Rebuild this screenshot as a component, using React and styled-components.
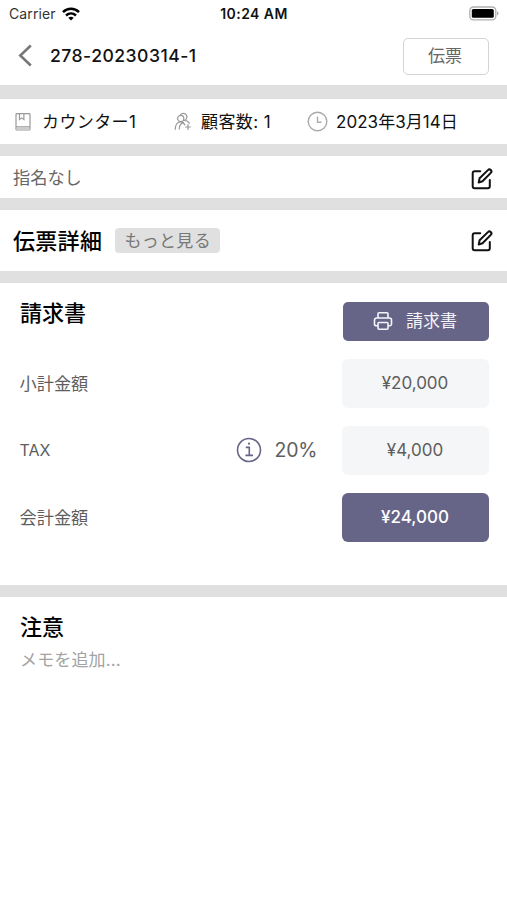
import React from "react";
import styled, { createGlobalStyle } from "styled-components";

const GlobalStyle = createGlobalStyle`
  * { box-sizing: border-box; }
  body {
    margin: 0;
    background: #fff;
    color: #111;
    font-family: Inter, "Noto Sans CJK JP", sans-serif;
  }
  svg { display: block; flex: none; }
`;

const Screen = styled.main`
  display: flex;
  flex-direction: column;
  width: 507px;
  height: 900px;
  background: #fff;
  overflow: hidden;
`;

const Divider = styled.div`
  flex: none;
  height: ${(p) => p.$size || 12}px;
  background: #e0e0e0;
`;

const StatusBar = styled.div`
  display: grid;
  grid-template-columns: 1fr auto 1fr;
  align-items: center;
  height: 27px;
  padding: 0 8px 0 9px;
  line-height: 18px;
`;

const Carrier = styled.div`
  display: flex;
  align-items: center;
  gap: 6px;
  font-size: 14px;
  letter-spacing: 0.1px;
  color: #333;
`;

const Clock = styled.div`
  font-size: 14px;
  font-weight: 600;
  letter-spacing: 0.45px;
`;

const Battery = styled.div`
  justify-self: end;
`;

const Header = styled.header`
  display: flex;
  align-items: center;
  height: 58px;
  padding: 0 18px 1px 18px;
`;

const Title = styled.h1`
  flex: 1;
  margin: 0 0 0 17px;
  font-size: 17.6px;
  font-weight: 550;
  line-height: 24px;
  letter-spacing: 0.46px;
`;

const OutlineButton = styled.button`
  width: 86px;
  height: 37px;
  margin-top: 1px;
  padding: 0 2px 0 0;
  border: 1.5px solid #d4d4d4;
  border-radius: 5px;
  background: #fff;
  color: #666;
  font: 17px/24px Inter, "Noto Sans CJK JP", sans-serif;
`;

const InfoBar = styled.div`
  display: grid;
  grid-template-columns: 160px 133px auto;
  align-items: center;
  height: 45px;
  padding-left: 14px;
`;

const InfoItem = styled.div`
  display: flex;
  align-items: center;
  gap: ${(p) => p.$gap}px;
  font-size: 17px;
  line-height: 24px;
  letter-spacing: ${(p) => p.$tracking || 0}px;
  white-space: nowrap;
`;

const EditRow = styled.section`
  display: flex;
  align-items: center;
  height: ${(p) => p.$height}px;
  padding: ${(p) => p.$top || 0}px 13px 0 13px;
`;

const Assignee = styled.span`
  flex: 1;
  margin-top: -2px;
  font-size: 17.2px;
  line-height: 24px;
  color: #666;
`;

const Heading = styled.h2`
  margin: 0;
  font-size: 22px;
  font-weight: 500;
  line-height: 30px;
  letter-spacing: ${(p) => p.$tracking || 0}px;
  color: #000;
`;

const MoreButton = styled.button`
  width: 105px;
  height: 25px;
  margin: 0 auto 0 13px;
  padding: 0;
  border: 0;
  border-radius: 4px;
  background: #e0e0e0;
  color: #777;
  font: 17px/24px Inter, "Noto Sans CJK JP", sans-serif;
  letter-spacing: 0.3px;
`;

const Invoice = styled.section`
  display: flex;
  flex-direction: column;
  height: 302px;
  padding: 18px 18px 0 20px;
`;

const InvoiceHeader = styled.div`
  display: flex;
  align-items: center;
  justify-content: space-between;
  height: 40px;
  margin-bottom: 18px;

  ${Heading} { margin-top: -16px; }
`;

const PrintButton = styled.button`
  display: flex;
  align-items: center;
  justify-content: center;
  gap: 13px;
  width: 146px;
  height: 39px;
  padding: 0 2px 0 0;
  border: 0;
  border-radius: 5px;
  background: #676587;
  color: #f5f4fb;
  font: 17px/24px Inter, "Noto Sans CJK JP", sans-serif;
`;

const AmountRow = styled.div`
  display: flex;
  align-items: center;
  height: 49px;
  margin-bottom: 18px;
`;

const AmountLabel = styled.span`
  flex: 1;
  margin: ${(p) => (p.$size ? "-2px" : "0")} 0 0 -0.5px;
  font-size: ${(p) => p.$size || 17.2}px;
  line-height: 24px;
  color: #5e5e5e;
`;

const Rate = styled.div`
  display: flex;
  align-items: center;
  gap: 13px;
  margin: -1px 25px 0 0;
  font-size: 19.5px;
  line-height: 26px;
  letter-spacing: -0.3px;
  color: #5e5e5e;
`;

const Amount = styled.div`
  width: 147px;
  height: 49px;
  padding-right: 1px;
  border-radius: 6px;
  background: ${(p) => (p.$total ? "#676587" : "#f4f6f8")};
  color: ${(p) => (p.$total ? "#fff" : "#5e5e5e")};
  font-size: 17px;
  font-weight: ${(p) => (p.$total ? 500 : 400)};
  line-height: 49px;
  text-align: center;
`;

const Notes = styled.section`
  padding: 15px 20px;
`;

const Memo = styled.p`
  margin: 6px 0 0;
  font-size: 17px;
  line-height: 24px;
  letter-spacing: 0.15px;
  color: #a3a3a3;
`;

const WifiIcon = () => (
  <svg width="18" height="14" viewBox="0 0 18 14" fill="none" stroke="#000" strokeWidth="2.5">
    <path d="M1 5.1C5.5.6 12.5.6 17 5.1" />
    <path d="M4 8.5c2.9-2.7 7.1-2.7 10 0" />
    <path d="M6.3 10.8c1.6-1.4 3.8-1.4 5.4 0L9 13.6z" fill="#000" stroke="none" />
  </svg>
);

const BatteryIcon = () => (
  <svg width="31" height="16" viewBox="0 0 31 16">
    <rect x="1.8" y="1" width="26" height="12.8" rx="3.6" fill="#fff" stroke="#b0b0b0" strokeWidth="1.3" />
    <rect x="3.8" y="3" width="22" height="8.8" rx="1.6" />
    <path d="M29 5.2c2 .8 2 3.6 0 4.4z" fill="#aaa" />
  </svg>
);

const BackIcon = () => (
  <svg width="15" height="24" viewBox="0 0 15 24" fill="none" stroke="#777" strokeWidth="2.6">
    <path d="M12.8 1.5 2.3 11.5l10.5 10" />
  </svg>
);

const BookIcon = () => (
  <svg width="18" height="20" viewBox="0 0 18 20" fill="none" stroke="#999" strokeWidth="1.2">
    <rect x="2" y="1.6" width="14" height="16.4" rx=".8" />
    <path d="M2 14.8h14M5.5 1.6v6l2.2-1.7 2.2 1.7v-6" />
    <path d="M2.5 16.5h13" stroke="#ccc" />
  </svg>
);

const GuestsIcon = () => (
  <svg width="18" height="19" viewBox="0 0 18 19" fill="none" stroke="#999" strokeWidth="1.2" strokeLinecap="round">
    <circle cx="6.7" cy="6.5" r="3.1" />
    <path d="M6.6 2.6C8 .4 12.9 1 12.9 4.9c0 1.500-.9 2.800-2.200 3.400 2.200.3 3.700 1.300 4.600 3M1.200 17.300c.1-4.400 2.300-7.500 5.300-7.500 1.900 0 3.500 1.100 4.400 3.100M5.200 17c.2-3.200 1.800-5.600 4.300-6.300M14 12.600v4.800M11.600 15h4.800" />
  </svg>
);

const ClockIcon = () => (
  <svg width="21" height="21" viewBox="0 0 21 21" fill="none" stroke="#aaa" strokeWidth="1.4">
    <circle cx="10.5" cy="10.5" r="9.3" />
    <path d="M10.5 5.5v5.7h4" />
  </svg>
);

const EditIcon = () => (
  <svg width="24" height="24" viewBox="0 0 24 24" fill="none" stroke="#111" strokeWidth="2" strokeLinecap="round" strokeLinejoin="round">
    <path d="M10.2 4.2H4.700a2 2 0 0 0-2 2v13a2 2 0 0 0 2 2h13.100a2 2 0 0 0 2-2v-6.100" />
    <path d="m8.700 15.500.9-4.200 8.300-8.200a2 2 0 0 1 2.900 2.800l-8.300 8.400z" />
  </svg>
);

const PrinterIcon = () => (
  <svg width="20" height="20" viewBox="0 0 20 20" fill="none" stroke="#f5f4fb" strokeWidth="1.6" strokeLinejoin="round">
    <path d="M5 7V2.700c0-.6.400-1 1-1h8c.6 0 1 .4 1 1V7M5 14.800H3.300A1.800 1.800 0 0 1 1.500 13V9c0-1.100.9-2 2-2h13c1.100 0 2 .9 2 2v4a1.800 1.800 0 0 1-1.800 1.800H15" />
    <rect x="5" y="11.500" width="10" height="6.800" rx="1" />
  </svg>
);

const DetailIcon = () => (
  <svg width="26" height="26" viewBox="0 0 26 26" fill="none" stroke="#676587" strokeWidth="1.6">
    <circle cx="13" cy="13" r="11.5" />
    <path d="M9.800 10.400h3.500v8M9.400 18.400h7.600" />
    <circle cx="13" cy="6.700" r="1.100" fill="#676587" stroke="none" />
  </svg>
);

export default function App() {
  return (
    <>
      <GlobalStyle />
      <Screen>
        <StatusBar>
          <Carrier>Carrier <WifiIcon /></Carrier>
          <Clock>10:24 AM</Clock>
          <Battery><BatteryIcon /></Battery>
        </StatusBar>
        <Header>
          <BackIcon />
          <Title>278-20230314-1</Title>
          <OutlineButton>伝票</OutlineButton>
        </Header>
        <Divider $size={14} />
        <InfoBar>
          <InfoItem $gap={10} $tracking={0.4}><BookIcon />カウンター1</InfoItem>
          <InfoItem $gap={9} $tracking={0.4}><GuestsIcon />顧客数: 1</InfoItem>
          <InfoItem $gap={8} $tracking={0.05}><ClockIcon />2023年3月14日</InfoItem>
        </InfoBar>
        <Divider />
        <EditRow $height={42} $top={4}>
          <Assignee>指名なし</Assignee>
          <EditIcon />
        </EditRow>
        <Divider />
        <EditRow $height={61}>
          <Heading $tracking={0.3}>伝票詳細</Heading>
          <MoreButton>もっと見る</MoreButton>
          <EditIcon />
        </EditRow>
        <Divider />
        <Invoice>
          <InvoiceHeader>
            <Heading>請求書</Heading>
            <PrintButton><PrinterIcon />請求書</PrintButton>
          </InvoiceHeader>
          <AmountRow>
            <AmountLabel>小計金額</AmountLabel>
            <Amount>¥20,000</Amount>
          </AmountRow>
          <AmountRow>
            <AmountLabel $size={16}>TAX</AmountLabel>
            <Rate><DetailIcon />20%</Rate>
            <Amount>¥4,000</Amount>
          </AmountRow>
          <AmountRow>
            <AmountLabel>会計金額</AmountLabel>
            <Amount $total>¥24,000</Amount>
          </AmountRow>
        </Invoice>
        <Divider />
        <Notes>
          <Heading>注意</Heading>
          <Memo>メモを追加...</Memo>
        </Notes>
      </Screen>
    </>
  );
}
